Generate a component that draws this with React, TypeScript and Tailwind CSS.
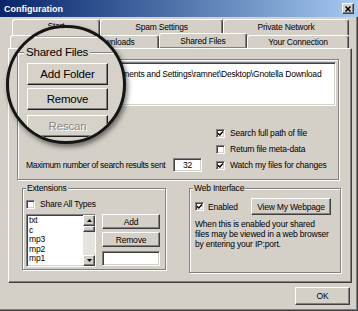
import type { ReactNode } from "react";

const raised =
  "border border-t-white border-l-white border-r-[#404040] border-b-[#404040] bg-[#d4d0c8] shadow-[inset_-1px_-1px_0_#808080]";
const sunken =
  "border border-t-[#808080] border-l-[#808080] border-r-white border-b-white bg-white shadow-[inset_1px_1px_0_#404040,inset_-1px_-1px_0_#d4d0c8]";
const lensButton =
  "h-[22px] w-[81px] border border-t-white border-l-white border-r-[#202020] border-b-[#202020] bg-[#d6d2ca] shadow-[inset_-1px_-1px_0_#808080]";

function Check({ checked }: { checked?: boolean }) {
  return (
    <span className={`flex h-[9px] w-[9px] shrink-0 items-center justify-center ${sunken}`}>
      {checked && (
        <svg width="7" height="7" viewBox="0 0 7 7">
          <path d="M1 3.2 L2.8 5 L6 1.5" fill="none" stroke="#000" strokeWidth="1.4" />
        </svg>
      )}
    </span>
  );
}

function CheckRow({ label, checked }: { label: string; checked?: boolean }) {
  return (
    <div className="flex h-[16px] items-center gap-[5px] whitespace-nowrap">
      <Check checked={checked} />
      <span>{label}</span>
    </div>
  );
}

function Group({
  label,
  className,
  children,
}: {
  label?: string;
  className: string;
  children: ReactNode;
}) {
  return (
    <div
      className={`relative border border-[#808080] shadow-[inset_1px_1px_0_#fff,1px_1px_0_#fff] ${className}`}
    >
      {label && (
        <span className="absolute -top-[6px] left-[3px] bg-[#d4d0c8] px-[1px] whitespace-nowrap">
          {label}
        </span>
      )}
      {children}
    </div>
  );
}

function Tab({ children, className }: { children?: ReactNode; className: string }) {
  return (
    <div
      className={`flex items-center justify-center whitespace-nowrap rounded-t-[3px] border-t border-r border-l border-t-white border-l-white border-r-[#404040] bg-[#d4d0c8] shadow-[inset_-1px_0_0_#808080] ${className}`}
    >
      {children}
    </div>
  );
}

function Arrow({ up }: { up?: boolean }) {
  return (
    <div className={`flex h-[11px] items-center justify-center ${raised}`}>
      <svg width="5" height="3" viewBox="0 0 5 3">
        <path d={up ? "M0 3 L2.5 0 L5 3 Z" : "M0 0 L2.5 3 L5 0 Z"} fill="#000" />
      </svg>
    </div>
  );
}

export default function App() {
  return (
    <div className="relative h-[311px] w-[358px] overflow-hidden bg-[#d4d0c8] font-['Liberation_Sans',Arial,sans-serif] text-[8.5px] leading-[10px] tracking-[-0.2px] text-black shadow-[inset_-1px_-1px_0_#404040,inset_-2px_-2px_0_#808080]">
      {/* title bar */}
      <div className="flex h-[17px] items-center justify-between bg-linear-to-r from-[#0a246a] to-[#a6caf0] px-[4px]">
        <span className="text-[9px] font-bold tracking-normal text-white">Configuration</span>
        <button className={`flex h-[11px] w-[12px] items-center justify-center ${raised}`}>
          <svg width="6" height="6" viewBox="0 0 6 6">
            <path d="M0.5 0.5 L5.5 5.5 M5.5 0.5 L0.5 5.5" stroke="#000" strokeWidth="1.5" />
          </svg>
        </button>
      </div>

      {/* tabs */}
      <div className="mt-[2px] flex pl-[12px]">
        <Tab className="h-[16px] w-[88px] pb-[4px]">Start</Tab>
        <Tab className="h-[16px] w-[123px] pb-[2px]">Spam Settings</Tab>
        <Tab className="h-[16px] w-[126px] pb-[2px]">Private Network</Tab>
      </div>
      <div className="flex h-[13px] items-end pl-[10px]">
        <Tab className="h-[13px] w-[60px]" />
        <Tab className="h-[13px] w-[89px]">Downloads</Tab>
        <Tab className="relative h-[15px] w-[88px] border-b border-b-[#808080]">Shared Files</Tab>
        <Tab className="h-[13px] w-[102px]">Your Connection</Tab>
      </div>

      {/* panel */}
      <div className="ml-[8px] flex h-[235px] w-[344px] flex-col border border-t-white border-l-white border-r-[#404040] border-b-[#404040] shadow-[inset_-1px_-1px_0_#808080]">
        {/* "Shared Files" label and folder buttons are drawn in the lens */}
        <Group className="ml-[8px] mt-[10px] h-[121px] w-[322px]">
          <div
            className={`mt-[2px] ml-[72px] mr-[2px] h-[44px] overflow-hidden whitespace-nowrap pl-[2px] pt-[6px] ${sunken}`}
          >
            C:\Documents and Settings\ramnet\Desktop\Gnotella Download
          </div>
          <div className="mt-[19px] flex items-end">
            <div className="mb-[1px] ml-[8px] flex w-[190px] items-center whitespace-nowrap">
              <span className="tracking-[-0.32px]">Maximum number of search results sent</span>
              <div
                className={`ml-auto mr-[14px] flex h-[14px] w-[29px] items-center justify-center ${sunken}`}
              >
                32
              </div>
            </div>
            <div className="flex flex-col">
              <CheckRow label="Search full path of file" checked />
              <CheckRow label="Return file meta-data" />
              <CheckRow label="Watch my files for changes" checked />
            </div>
          </div>
        </Group>

        <div className="mt-[8px] flex items-start">
          <Group label="Extensions" className="ml-[13px] h-[82px] w-[144px]">
            <div className="mt-[7px] pl-[3px]">
              <CheckRow label="Share All Types" />
            </div>
            <div className="mt-[2px] flex gap-[6px] pl-[3px]">
              <div className={`flex h-[53px] w-[70px] ${sunken}`}>
                <div className="flex-1 pl-[2px] pt-[1px] leading-[9.5px]">
                  <div>txt</div>
                  <div>c</div>
                  <div>mp3</div>
                  <div>mp2</div>
                  <div>mp1</div>
                </div>
                <div className="flex w-[12px] flex-col bg-[#e6e3de]">
                  <Arrow up />
                  <div className={`h-[6px] ${raised}`} />
                  <div className="flex-1" />
                  <Arrow />
                </div>
              </div>
              <div className="flex w-[58px] flex-col">
                <button className={`h-[15px] ${raised}`}>Add</button>
                <button className={`mt-[3px] h-[15px] ${raised}`}>Remove</button>
                <div className={`mt-[4px] h-[15px] ${sunken}`} />
              </div>
            </div>
          </Group>

          <Group label="Web Interface" className="ml-[23px] h-[85px] w-[152px]">
            <div className="mt-[9px] flex h-[17px] items-center pl-[5px]">
              <div className="flex w-[56px] items-center gap-[4px]">
                <Check checked />
                <span>Enabled</span>
              </div>
              <button className={`h-[17px] w-[80px] whitespace-nowrap ${raised}`}>
                View My Webpage
              </button>
            </div>
            <div className="mt-[4px] whitespace-nowrap pl-[5px]">
              When this is enabled your shared
              <br />
              files may be viewed in a web browser
              <br />
              by entering your IP:port.
            </div>
          </Group>
        </div>
      </div>

      <div className="mt-[4px] flex justify-end pr-[8px]">
        <button className={`h-[18px] w-[55px] ${raised}`}>OK</button>
      </div>

      {/* magnifier lens */}
      <div className="absolute left-[6px] top-[25px] h-[119px] w-[120px] overflow-hidden rounded-full border-[3px] border-[#151515] bg-[#d6d2ca] text-[11.5px] leading-[14px] shadow-[2px_3px_5px_rgba(0,0,0,0.5)]">
        <div className="mt-[8px] h-[2px] border-t border-[#a8a49c] bg-white" />
        <div className="relative ml-[8px] mt-[14px] h-[200px] w-[220px] border border-[#808080] shadow-[inset_1px_1px_0_#fff]">
          <span className="absolute -top-[8px] left-[6px] bg-[#d6d2ca] px-[2px] whitespace-nowrap">
            Shared Files
          </span>
          <div className="flex flex-col pl-[9px] pt-[10px]">
            <button className={lensButton}>Add Folder</button>
            <button className={`mt-[3px] ${lensButton}`}>Remove</button>
            <button
              disabled
              className={`mt-[5px] text-[#8a8780] [text-shadow:1px_1px_0_#fff] ${lensButton}`}
            >
              Rescan
            </button>
          </div>
        </div>
      </div>
    </div>
  );
}
